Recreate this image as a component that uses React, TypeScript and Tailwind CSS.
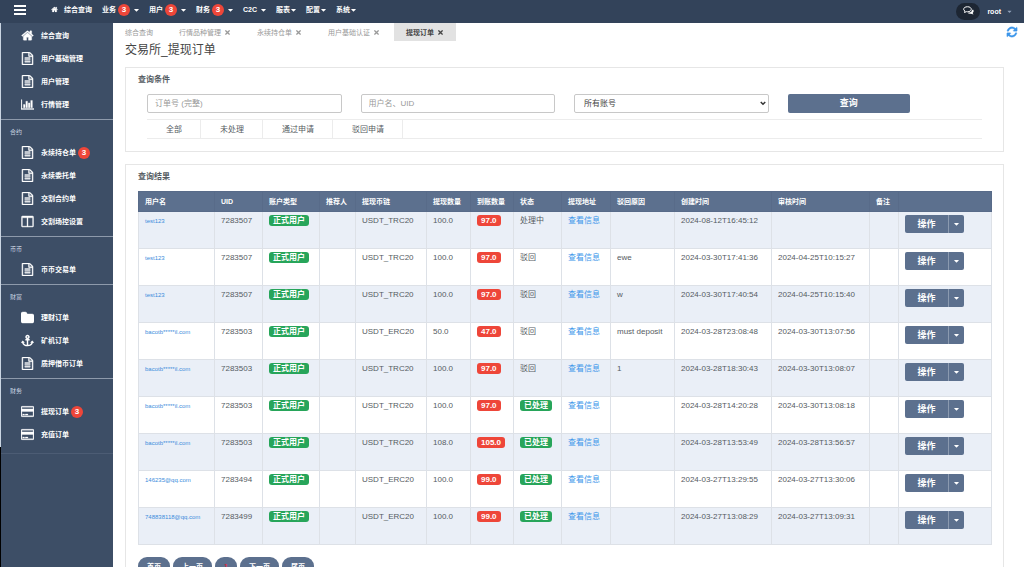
import React, { useState } from 'react';
import { FaAnchor, FaCaretDown, FaTimes } from 'react-icons/fa';

interface IconShape {
  box: string;
  d: string;
}

const icons: Record<string, IconShape> = {
  home: {
    box: '0 0 1792 1792',
    d: 'M1472 992v480q0 26-19 45t-45 19h-384v-384h-256v384h-384q-26 0-45-19t-19-45v-480q0-1 .5-3t.5-3l575-474 575 474q1 2 1 6zm223-69l-62 74q-8 9-21 11h-3q-13 0-21-7l-692-577-692 577q-12 8-24 7-13-2-21-11l-62-74q-8-10-7-23.5t11-21.5l719-599q32-26 76-26t76 26l244 204v-195q0-14 9-23t23-9h192q14 0 23 9t9 23v408l219 182q10 8 11 21.5t-7 23.5z',
  },
  file: {
    box: '0 0 1536 1792',
    d: 'M1468 380q28 28 48 76t20 88v1152q0 40-28 68t-68 28h-1344q-40 0-68-28t-28-68v-1600q0-40 28-68t68-28h896q40 0 88 20t76 48zm-444-244v376h376q-10-29-22-41l-313-313q-12-12-41-22zm384 1528v-1024h-416q-40 0-68-28t-28-68v-416h-768v1536h1280zm-1024-864q0-14 9-23t23-9h704q14 0 23 9t9 23v64q0 14-9 23t-23 9h-704q-14 0-23-9t-9-23v-64zm736 224q14 0 23 9t9 23v64q0 14-9 23t-23 9h-704q-14 0-23-9t-9-23v-64q0-14 9-23t23-9h704zm0 256q14 0 23 9t9 23v64q0 14-9 23t-23 9h-704q-14 0-23-9t-9-23v-64q0-14 9-23t23-9h704z',
  },
  chart: {
    box: '0 0 2048 1792',
    d: 'M640 896v512h-256v-512h256zm384-512v1024h-256v-1024h256zm1024 1152v128h-2048v-1536h128v1408h1920zm-640-896v768h-256v-768h256zm384-384v1152h-256v-1152h256z',
  },
  columns: {
    box: '0 0 1664 1792',
    d: 'M160 1536h608v-1152h-640v1120q0 13 9.5 22.5t22.5 9.5zm1376-32v-1120h-640v1152h608q13 0 22.5-9.5t9.5-22.5zm128-1216v1216q0 66-47 113t-113 47h-1344q-66 0-113-47t-47-113v-1216q0-66 47-113t113-47h1344q66 0 113 47t47 113z',
  },
  folder: {
    box: '0 0 1664 1664',
    d: 'M1664 608v704q0 92-66 158t-158 66h-1216q-92 0-158-66t-66-158v-960q0-92 66-158t158-66h320q92 0 158 66t66 158v32h672q92 0 158 66t66 158z',
  },
  card: {
    box: '0 0 1920 1792',
    d: 'M1760 128q66 0 113 47t47 113v1216q0 66-47 113t-113 47h-1600q-66 0-113-47t-47-113v-1216q0-66 47-113t113-47h1600zm-1600 128q-13 0-22.5 9.5t-9.5 22.5v224h1664v-224q0-13-9.5-22.5t-22.5-9.5h-1600zm1600 1280q13 0 22.5-9.5t9.5-22.5v-608h-1664v608q0 13 9.5 22.5t22.5 9.5h1600zm-1504-128v-128h256v128h-256zm384 0v-128h384v128h-384z',
  },
  refresh: {
    box: '0 0 1792 1792',
    d: 'M1639 1056q0 5-1 7-64 268-268 434.5t-478 166.5q-146 0-282.5-55t-243.5-157l-129 129q-19 19-45 19t-45-19-19-45v-448q0-26 19-45t45-19h448q26 0 45 19t19 45-19 45l-137 137q71 66 161 102t187 36q134 0 250-65t186-179q11-17 53-117 8-23 30-23h192q13 0 22.5 9.5t9.5 22.5zm25-800v448q0 26-19 45t-45 19h-448q-26 0-45-19t-19-45 19-45l138-138q-148-137-349-137-134 0-250 65t-186 179q-11 17-53 117-8 23-30 23h-199q-13 0-22.5-9.5t-9.5-22.5v-7q65-268 270-434.5t480-166.5q146 0 284 55.5t245 156.5l130-129q19-19 45-19t45 19 19 45z',
  },
};

const Icon: React.FC<{ name: string; className?: string }> = ({ name, className }) => {
  if (name === 'anchor') return <FaAnchor className={className} />;
  return (
    <svg viewBox={icons[name].box} className={className} fill="currentColor" aria-hidden="true">
      <path d={icons[name].d} stroke="currentColor" strokeWidth="50" />
    </svg>
  );
};

const Badge: React.FC<{ count: number }> = ({ count }) => (
  <span className="flex h-3 w-3 shrink-0 items-center justify-center rounded-full bg-[#ee4639] text-[8px] font-bold text-white">
    {count}
  </span>
);

interface NavItem {
  label: string;
  icon?: string;
  badge?: number;
}

const topNav: NavItem[] = [
  { label: '业务', badge: 3 },
  { label: '用户', badge: 3 },
  { label: '财务', badge: 3 },
  { label: 'C2C' },
];

const topNavRight: NavItem[] = [{ label: '服表' }, { label: '配置' }, { label: '系统' }];

const sections: { title?: string; items: NavItem[] }[] = [
  {
    items: [
      { label: '综合查询', icon: 'home' },
      { label: '用户基础管理', icon: 'file' },
      { label: '用户管理', icon: 'file' },
      { label: '行情管理', icon: 'chart' },
    ],
  },
  {
    title: '合约',
    items: [
      { label: '永续持仓单', icon: 'file', badge: 3 },
      { label: '永续委托单', icon: 'file' },
      { label: '交割合约单', icon: 'file' },
      { label: '交割场控设置', icon: 'columns' },
    ],
  },
  { title: '币币', items: [{ label: '币币交易单', icon: 'file' }] },
  {
    title: '财富',
    items: [
      { label: '理财订单', icon: 'folder' },
      { label: '矿机订单', icon: 'anchor' },
      { label: '质押借币订单', icon: 'file' },
    ],
  },
  {
    title: '财务',
    items: [
      { label: '提现订单', icon: 'card', badge: 3 },
      { label: '充值订单', icon: 'card' },
    ],
  },
];

const pageTabs = ['综合查询', '行情品种管理', '永续持仓单', '用户基础认证', '提现订单'];
const statusTabs = ['全部', '未处理', '通过申请', '驳回申请'];
const pages = ['首页', '上一页', '1', '下一页', '尾页'];

const columns = [
  { title: '用户名', width: 'w-[76px]' },
  { title: 'UID', width: 'w-[48px]' },
  { title: '账户类型', width: 'w-[57px]' },
  { title: '推荐人', width: 'w-[36px]' },
  { title: '提现币链', width: 'w-[71px]' },
  { title: '提现数量', width: 'w-[44px]' },
  { title: '到账数量', width: 'w-[43px]' },
  { title: '状态', width: 'w-[48px]' },
  { title: '提现地址', width: 'w-[49px]' },
  { title: '驳回原因', width: 'w-[64px]' },
  { title: '创建时间', width: 'w-[97px]' },
  { title: '审核时间', width: 'w-[98px]' },
  { title: '备注', width: 'w-[29px]' },
  { title: '', width: 'w-[93px]' },
];

interface Order {
  user: string;
  uid: string;
  chain: string;
  amount: string;
  received: string;
  status: string;
  reason: string;
  created: string;
  reviewed: string;
}

const orders: Order[] = [
  { user: 'test123', uid: '7283507', chain: 'USDT_TRC20', amount: '100.0', received: '97.0', status: '处理中', reason: '', created: '2024-08-12T16:45:12', reviewed: '' },
  { user: 'test123', uid: '7283507', chain: 'USDT_TRC20', amount: '100.0', received: '97.0', status: '驳回', reason: 'ewe', created: '2024-03-30T17:41:36', reviewed: '2024-04-25T10:15:27' },
  { user: 'test123', uid: '7283507', chain: 'USDT_TRC20', amount: '100.0', received: '97.0', status: '驳回', reason: 'w', created: '2024-03-30T17:40:54', reviewed: '2024-04-25T10:15:40' },
  { user: 'bacotb*****il.com', uid: '7283503', chain: 'USDT_ERC20', amount: '50.0', received: '47.0', status: '驳回', reason: 'must deposit', created: '2024-03-28T23:08:48', reviewed: '2024-03-30T13:07:56' },
  { user: 'bacotb*****il.com', uid: '7283503', chain: 'USDT_TRC20', amount: '100.0', received: '97.0', status: '驳回', reason: '1', created: '2024-03-28T18:30:43', reviewed: '2024-03-30T13:08:07' },
  { user: 'bacotb*****il.com', uid: '7283503', chain: 'USDT_TRC20', amount: '100.0', received: '97.0', status: '已处理', reason: '', created: '2024-03-28T14:20:28', reviewed: '2024-03-30T13:08:18' },
  { user: 'bacotb*****il.com', uid: '7283503', chain: 'USDT_TRC20', amount: '108.0', received: '105.0', status: '已处理', reason: '', created: '2024-03-28T13:53:49', reviewed: '2024-03-28T13:56:57' },
  { user: '146235@qq.com', uid: '7283494', chain: 'USDT_ERC20', amount: '100.0', received: '99.0', status: '已处理', reason: '', created: '2024-03-27T13:29:55', reviewed: '2024-03-27T13:30:06' },
  { user: '748838118@qq.com', uid: '7283499', chain: 'USDT_ERC20', amount: '100.0', received: '99.0', status: '已处理', reason: '', created: '2024-03-27T13:08:29', reviewed: '2024-03-27T13:09:31' },
];

const Header: React.FC = () => (
  <header className="flex h-[23px] shrink-0 items-center bg-[#33435a] pb-1 text-[7px] font-bold text-white">
    <button aria-label="菜单" className="ml-3.5 flex w-3 flex-col gap-0.5">
      <span className="h-0.5 w-full bg-white" />
      <span className="h-0.5 w-full bg-white" />
      <span className="h-0.5 w-full bg-white" />
    </button>
    <nav className="ml-[25px] flex flex-1 items-center gap-[10px]">
      <a href="#" className="flex items-center gap-1.5">
        <Icon name="home" className="h-[7px] w-[7px]" />
        综合查询
      </a>
      {topNav.map((item) => (
        <a href="#" key={item.label} className="flex items-center">
          {item.label}
          {item.badge && <span className="ml-0.5"><Badge count={item.badge} /></span>}
          <FaCaretDown className="ml-1 h-2 w-[5px]" />
        </a>
      ))}
      {topNavRight.map((item) => (
        <a href="#" key={item.label} className="flex items-center gap-px">
          {item.label}
          <FaCaretDown className="h-2 w-[5px]" />
        </a>
      ))}
    </nav>
    <div className="flex items-center pt-1">
      <button aria-label="消息" className="flex h-[17px] w-6 items-center justify-center rounded-full bg-[#1d2633] pb-0.5">
        <svg viewBox="0 0 22 18" className="h-[9px] w-[11px]" aria-hidden="true">
          <path d="M20.5 7.5c1.5 2.5.8 5-1.3 6.5l1.8 3-5-1.7c-3 .5-5.500-.3-7-1.8 5 .2 9.500-2 9.500-6z" fill="white" />
          <path d="M9 1.500c4.500 0 7.500 2 7.500 5s-3 5-7.500 5c-.8 0-1.500 0-2.200-.2L3 13l1-2.800C2.300 9.300 1.300 8 1.300 6.500c0-3 3.200-5 7.700-5z" fill="none" stroke="white" strokeWidth="2" />
        </svg>
      </button>
      <button className="ml-[7px] mr-3 flex items-center gap-1.5 font-bold">
        root
        <FaCaretDown className="h-[7px] w-[5px] text-slate-400" />
      </button>
    </div>
  </header>
);

const Sidebar: React.FC = () => (
  <aside className="flex w-[113px] shrink-0 bg-[#3d4e66] text-[7px] text-white">
    <div className="w-px bg-black">
      <div className="h-[78%] bg-slate-300" />
    </div>
    <div className="flex-1">
      {sections.map((section, i) => (
        <div key={i} className="border-b border-[#8e9aab] pb-[3px] last:border-[#4c5c74] last:pb-[7px]">
          {section.title ? (
            <h3 className="flex h-[21px] items-center pl-[9px] pt-1 text-[6px] text-slate-300">{section.title}</h3>
          ) : (
            <div className="h-px" />
          )}
          {section.items.map((item) => (
            <a href="#" key={item.label} className="flex h-[23px] items-center font-bold">
              <span className="ml-[19px] flex w-[14px] justify-center">
                <Icon name={item.icon!} className="h-[13px] w-[13px]" />
              </span>
              <span className="ml-[7px] mr-0.5">{item.label}</span>
              {item.badge && <Badge count={item.badge} />}
            </a>
          ))}
        </div>
      ))}
    </div>
  </aside>
);

const OrderRow: React.FC<{ order: Order }> = ({ order }) => (
  <tr className="h-[37px] odd:bg-[#eaeff7] [&>td]:border [&>td]:border-[#dde1e7] [&>td]:px-1.5 [&>td]:pt-[3px] [&>td]:align-top">
    <td>
      <a href="#" className="text-[6px] text-[#3c8ddc]">{order.user}</a>
    </td>
    <td>{order.uid}</td>
    <td>
      <span className="inline-block h-[11px] rounded-[3px] bg-[#27a55a] px-1 font-bold leading-[11px] text-white">正式用户</span>
    </td>
    <td></td>
    <td>{order.chain}</td>
    <td>{order.amount}</td>
    <td>
      <span className="inline-block h-[11px] rounded-[3px] bg-[#ee4639] px-1 font-bold leading-[11px] text-white">{order.received}</span>
    </td>
    <td>
      {order.status === '已处理' ? (
        <span className="inline-block h-[11px] rounded-[3px] bg-[#27a55a] px-1 font-bold leading-[11px] text-white">{order.status}</span>
      ) : (
        order.status
      )}
    </td>
    <td>
      <a href="#" className="text-[#3c96ea]">查看信息</a>
    </td>
    <td>{order.reason}</td>
    <td>{order.created}</td>
    <td>{order.reviewed}</td>
    <td></td>
    <td>
      <div className="flex h-[18px] text-white">
        <button className="w-[43px] rounded-l-[2px] bg-[#5c708e] text-[9px] font-bold">操作</button>
        <button aria-label="更多操作" className="flex w-4 items-center justify-center rounded-r-[2px] border-l border-[#8b9ab0] bg-[#5c708e]">
          <FaCaretDown className="h-2 w-[5px]" />
        </button>
      </div>
    </td>
  </tr>
);

const App: React.FC = () => {
  const [orderNo, setOrderNo] = useState('');
  const [userName, setUserName] = useState('');

  return (
    <div className="flex h-screen flex-col overflow-hidden bg-white font-['Liberation_Sans','Noto_Sans_CJK_SC',sans-serif] text-[8px] leading-[11px] text-[#555b62]">
      <Header />
      <div className="flex min-h-0 flex-1">
        <Sidebar />
        <main className="min-w-0 flex-1 overflow-hidden">
          <div className="flex h-[18px] items-stretch justify-between pr-1.5">
            <div className="flex gap-0.5 text-[7px] text-[#999]">
              {pageTabs.map((tab, i) => (
                <a
                  href="#"
                  key={tab}
                  className={`flex items-center gap-[3px] px-3 ${i === pageTabs.length - 1 ? 'bg-[#e2e2e2] font-bold text-[#444]' : ''}`}
                >
                  {tab}
                  {i > 0 && <FaTimes className="h-[7px] w-[7px]" />}
                </a>
              ))}
            </div>
            <button aria-label="刷新" className="text-[#3c96ea]">
              <Icon name="refresh" className="h-3 w-3" />
            </button>
          </div>
          <h1 className="mb-2 ml-3 text-[12px] leading-[18px] text-[#444]">交易所_提现订单</h1>

          <section className="ml-3 mr-5 border border-[#e6e6e6] px-3 pb-3 pt-1.5">
            <h2 className="font-bold">查询条件</h2>
            <div className="mx-[9px] mt-[9px]">
              <form className="grid grid-cols-4 gap-[19px]" onSubmit={(e) => e.preventDefault()}>
                <input
                  type="text"
                  aria-label="订单号"
                  value={orderNo}
                  onChange={(e) => setOrderNo(e.target.value)}
                  className="h-[19px] w-full rounded-[2px] border border-[#c8c8c8] px-[7px] placeholder:text-[#999]"
                  placeholder="订单号 (完整)"
                />
                <input
                  type="text"
                  aria-label="用户名、UID"
                  value={userName}
                  onChange={(e) => setUserName(e.target.value)}
                  className="h-[19px] w-full rounded-[2px] border border-[#c8c8c8] px-[7px] placeholder:text-[#999]"
                  placeholder="用户名、UID"
                />
                <div className="relative">
                  <select aria-label="账号" className="h-[19px] w-full appearance-none rounded-[2px] border border-[#c8c8c8] px-[9px] text-[#444]">
                    <option>所有账号</option>
                  </select>
                  <svg viewBox="0 0 8 6" className="pointer-events-none absolute right-[3px] top-[7px] h-[5px] w-[6px]" fill="none" stroke="#333" strokeWidth="2">
                    <path d="M1 1l3 3 3-3" />
                  </svg>
                </div>
                <button type="submit" className="h-[19px] w-[63%] rounded-[2px] bg-[#5c708e] text-[9px] font-bold text-white">
                  查询
                </button>
              </form>
              <div className="mt-1.5 flex h-5 border-y border-[#ececec]">
                {statusTabs.map((tab) => (
                  <button key={tab} className="border-r border-[#ececec] pl-[19px] pr-[18px]">
                    {tab}
                  </button>
                ))}
              </div>
            </div>
          </section>

          <section className="ml-3 mr-5 mt-3 border border-[#e6e6e6] px-3 pb-3 pt-1.5">
            <h2 className="font-bold">查询结果</h2>
            <table className="mt-[9px] w-full table-fixed border-collapse text-left">
              <thead>
                <tr className="h-5 bg-[#5c708e] text-[7px] text-white">
                  {columns.map((col, i) => (
                    <th key={i} className={`${col.width} whitespace-nowrap border border-[#586b89] px-1.5 font-bold`}>
                      {col.title}
                    </th>
                  ))}
                </tr>
              </thead>
              <tbody>
                {orders.map((order) => (
                  <OrderRow key={order.created} order={order} />
                ))}
              </tbody>
            </table>
            <div className="mt-3 flex gap-[3px]">
              {pages.map((page) => (
                <button
                  key={page}
                  className={`h-[18px] rounded-full bg-[#5c708e] px-[9px] text-[7px] font-bold ${page === '1' ? 'text-[#e0243a]' : 'text-white'}`}
                >
                  {page}
                </button>
              ))}
            </div>
          </section>
        </main>
      </div>
    </div>
  );
};

export default App;
